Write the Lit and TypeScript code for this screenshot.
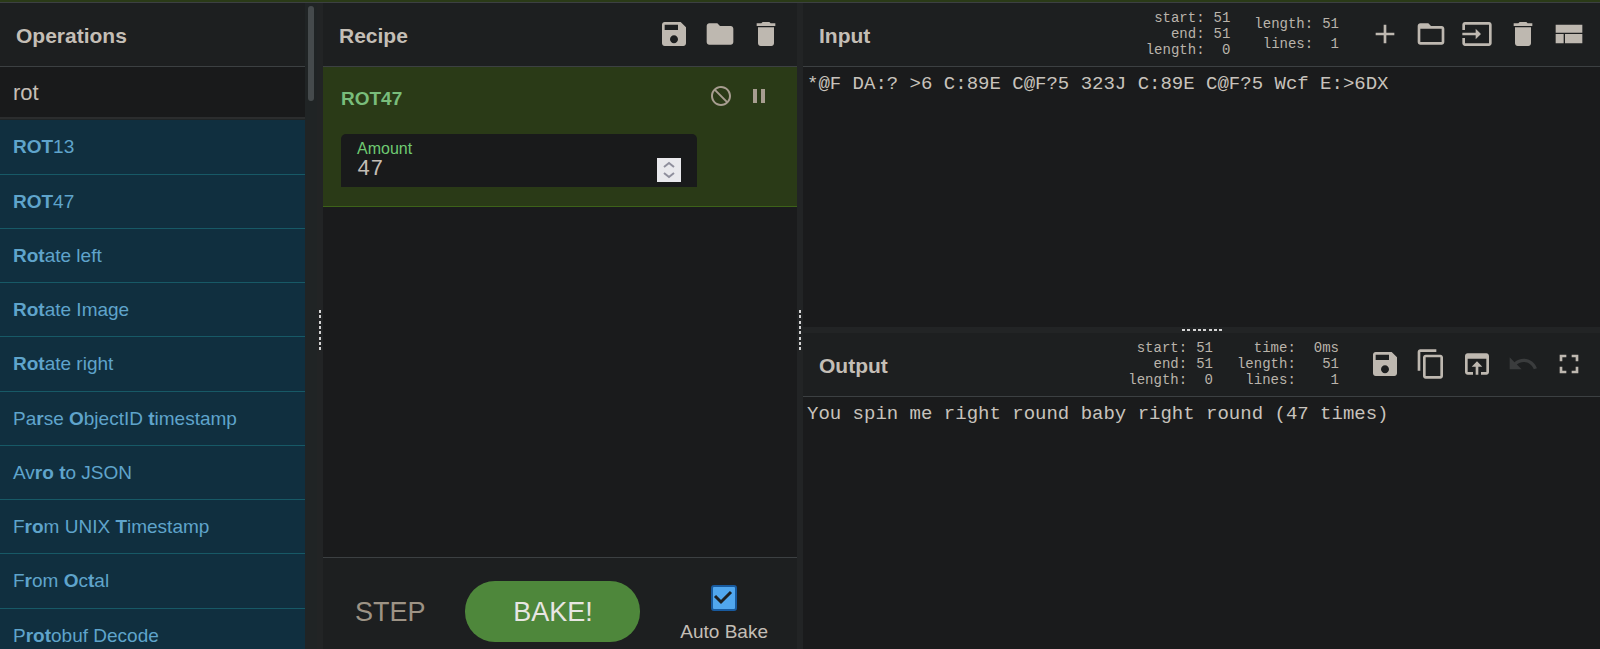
import { LitElement, html, css, svg } from "lit";
import { customElement, property, state } from "lit/decorators.js";

const ICONS: Record<string, string> = {
  save: "M17 3H5c-1.11 0-2 .9-2 2v14c0 1.1.89 2 2 2h14c1.1 0 2-.9 2-2V7l-4-4zm-5 16c-1.66 0-3-1.34-3-3s1.34-3 3-3 3 1.34 3 3-1.34 3-3 3zm3-10H5V5h10v4z",
  folder: "M10 4H4c-1.1 0-1.99.9-1.99 2L2 18c0 1.1.9 2 2 2h16c1.1 0 2-.9 2-2V8c0-1.1-.9-2-2-2h-8l-2-2z",
  remove: "M6 19c0 1.1.9 2 2 2h8c1.1 0 2-.9 2-2V7H6v12zM19 4h-3.5l-1-1h-5l-1 1H5v2h14V4z",
  add: "M19 13h-6v6h-2v-6H5v-2h6V5h2v6h6v2z",
  folderOpen: "M20 6h-8l-2-2H4c-1.1 0-1.99.9-1.99 2L2 18c0 1.1.9 2 2 2h16c1.1 0 2-.9 2-2V8c0-1.1-.9-2-2-2zm0 12H4V8h16v10z",
  input: "M21 3.01H3c-1.1 0-2 .9-2 2V9h2V4.99h18v14.03H3V15H1v4.01c0 1.1.9 1.98 2 1.98h18c1.1 0 2-.88 2-1.98v-14c0-1.11-.9-2-2-2zM11 16l4-4-4-4v3H1v2h10v3z",
  layout: "M2 19h6v-7H2v7zm7 0h13v-7H9v7zM2 5v6h20V5H2z",
  copy: "M16 1H4c-1.1 0-2 .9-2 2v14h2V3h12V1zm3 4H8c-1.1 0-2 .9-2 2v14c0 1.1.9 2 2 2h11c1.1 0 2-.9 2-2V7c0-1.1-.9-2-2-2zm0 16H8V7h11v14z",
  toInput: "M19 4H5c-1.11 0-2 .9-2 2v12c0 1.1.89 2 2 2h4v-2H5V8h14v10h-4v2h4c1.1 0 2-.9 2-2V6c0-1.1-.89-2-2-2zm-7 6l-4 4h3v6h2v-6h3l-4-4z",
  undo: "M12.5 8c-2.65 0-5.05.99-6.9 2.6L2 7v9h9l-3.62-3.62c1.39-1.16 3.16-1.88 5.12-1.88 3.54 0 6.55 2.31 7.6 5.5l2.37-.78C21.08 11.03 17.15 8 12.5 8z",
  fullscreen: "M7 14H5v5h5v-2H7v-3zm-2-4h2V7h3V5H5v5zm12 7h-3v2h5v-5h-2v3zM14 5v2h3v3h2V5h-5z",
  disable: "M12 2C17.52 2 22 6.48 22 12s-4.48 10-10 10S2 17.52 2 12 6.48 2 12 2zM20 12c0-4.42-3.58-8-8-8-1.85 0-3.55.63-4.9 1.69L18.31 16.9C19.37 15.55 20 13.85 20 12zm-8 8c1.85 0 3.55-.63 4.9-1.69L5.69 7.1C4.63 8.45 4 10.15 4 12c0 4.42 3.58 8 8 8z",
  pause: "M6 19h4V5H6v14zm8-14v14h4V5h-4z",
};

@customElement("icon-button")
class IconButton extends LitElement {
  @property() icon = "";
  @property() label = "";
  @property({ type: Boolean }) disabled = false;

  static styles = css`
    :host { display: block; }
    .button {
      display: block;
      width: 100%;
      padding: 0;
      border: 0;
      background: none;
      color: inherit;
      cursor: pointer;
    }
    .button:disabled { color: #3a3c3d; cursor: default; }
    .glyph { display: block; width: 100%; fill: currentColor; }
  `;

  render() {
    return html`<button class="button" title=${this.label} aria-label=${this.label} ?disabled=${this.disabled}>
      <svg class="glyph" viewBox="0 0 24 24" aria-hidden="true">${svg`<path d=${ICONS[this.icon]}></path>`}</svg>
    </button>`;
  }
}

/* Matched search letters are wrapped in square brackets. */
const OPERATIONS = [
  "[ROT]13",
  "[ROT]47",
  "[Rot]ate left",
  "[Rot]ate Image",
  "[Rot]ate right",
  "Pa[r]se [O]bjectID [t]imestamp",
  "Av[ro] [t]o JSON",
  "F[ro]m UNIX [T]imestamp",
  "F[r]om [O]c[t]al",
  "P[rot]obuf Decode",
];

type Stat = [string, string];

@customElement("app-root")
class AppRoot extends LitElement {
  @state() private amount = 47;

  static styles = css`
    :host {
      display: block;
      height: 100vh;
      overflow: hidden;
      background: #1a1b1c;
      color: #c4beb6;
      font-family: "Liberation Sans", Arial, sans-serif;
      font-size: 19px;
    }
    * { box-sizing: border-box; }
    .banner { height: 3px; background: #2a3a17; border-bottom: 1px solid #3c4042; }
    .workspace { display: flex; height: calc(100vh + 5px); }
    .pane { display: flex; flex-direction: column; min-width: 0; min-height: 0; }
    .operations { flex: 0 0 calc(20% - 3px); flex-direction: row; background: #202425; }
    .recipe { flex: 0 0 calc(30% - 6px); }
    .io { flex: 1; display: grid; grid-template-rows: 1fr 6px 1fr; min-width: 0; }

    .gutter { display: flex; align-items: center; justify-content: center; background: #222425; }
    .gutter.column { flex: 0 0 6px; }
    .grip { width: 2px; height: 40px;
      background: repeating-linear-gradient(#d4d4d4 0 3px, transparent 3px calc(100% * 2 / 15)); }
    .grip.across { width: 40px; height: 2px;
      background: repeating-linear-gradient(90deg, #d4d4d4 0 3px, transparent 3px calc(100% * 2 / 15)); }

    .title {
      display: flex;
      flex: 0 0 64px;
      align-items: center;
      padding: 0 15px 0 16px;
      background: #1d1f20;
      border-bottom: 1px solid #3c4042;
    }
    .heading { margin: 0; padding-top: 2px; font-size: 21px; line-height: 24px; font-weight: bold; color: #c4beb6; }
    .actions { display: flex; gap: 14px; margin-left: auto; padding-bottom: 1px; color: #beb8b0; }
    .actions icon-button { width: 32px; }

    .catalogue { flex: 1; display: flex; flex-direction: column; min-width: 0; overflow: hidden; }
    .search {
      flex: 0 0 52px;
      width: 100%;
      margin: 0 0 1px;
      padding: 2px 13px 0;
      border: 0;
      border-bottom: 2px solid #2b2d2e;
      outline: 0;
      background: #191a1b;
      color: #c4beb6;
      font: 22px "Liberation Sans", Arial, sans-serif;
    }
    .list { display: grid; grid-auto-rows: 55px 54px 54px 54px; margin: 0; padding: 0; list-style: none; }
    .operation {
      padding: 0 13px;
      background: #102f3f;
      border-bottom: 1px solid #175966;
      color: #5fa4cb;
      line-height: 54px;
      white-space: pre;
    }
    .track { flex: 0 0 12px; padding: 3px; }
    .thumb { height: 95px; border-radius: 3px; background: #454a4c; }

    .steps { flex: 1; min-height: 0; background: #1a1b1c; }
    .ingredient { padding: 14px 18px 19px; background: #2a3a17; border-bottom: 1px solid #3d6219; }
    .ingredient-head { display: flex; align-items: center; height: 30px; }
    .ingredient-name { margin: 0; padding-top: 5px; font-size: 19px; line-height: 23px; color: #79bd7b; }
    .ingredient-actions { display: flex; gap: 14px; margin-left: auto; padding-right: 8px; color: #a79d90; }
    .ingredient-actions icon-button { width: 24px; }
    .argument {
      display: grid;
      grid-template-columns: 1fr 24px;
      width: calc(80% + 6px);
      height: 53px;
      margin-top: 23px;
      padding: 5px 16px;
      background: #191a1b;
      border-radius: 5px 5px 0 0;
    }
    .argument-label { grid-column: 1 / -1; font-size: 16px; line-height: 19px; color: #6fc972; }
    .amount {
      width: 100%;
      height: 24px;
      margin: 0;
      padding: 0 0 2px;
      border: 0;
      outline: 0;
      background: none;
      color: #c4beb6;
      font: 22px "Liberation Mono", monospace;
      line-height: 22px;
      appearance: textfield;
    }
    .amount::-webkit-inner-spin-button { display: none; }
    .spinner { display: grid; grid-template-rows: 12px 12px; background: #e9e9ed; }
    .spin { display: block; padding: 0; border: 0; background: none; color: #8f8f9d; }
    .chevron { display: block; width: 24px; height: 12px; fill: none; stroke: currentColor; stroke-width: 2; }

    .controls {
      display: flex;
      flex: 0 0 100px;
      justify-content: space-between;
      align-items: flex-start;
      padding: 23px 29px 0 32px;
      background: #1d1f20;
      border-top: 1px solid #3c4042;
    }
    .step, .bake { height: 61px; padding: 2px 0 0; border: 0; font: 27px "Liberation Sans", Arial, sans-serif; }
    .step { background: none; color: #9d9385; }
    .bake { width: 175px; border-radius: 30px; background: #4e873b; color: #e8e6e3; }
    .auto { display: flex; flex-direction: column; align-items: center; padding-top: 4px; line-height: 22px; }
    .tick {
      appearance: none;
      width: 26px;
      height: 26px;
      margin: 0 0 10px;
      border: 2px solid #185a9e;
      border-radius: 3px;
      background: #51a7ee;
    }
    .tick-box { position: relative; display: flex; }
    .tick-mark { position: absolute; inset: 0; width: 26px; height: 26px; fill: none; stroke: #1e2021; stroke-width: 3; pointer-events: none; }
    .tick:not(:checked) + .tick-mark { display: none; }

    .stats { display: flex; gap: 24px; align-items: center; margin: 0 30px 0 auto; padding-bottom: 2px;
      font: 14px "Liberation Mono", monospace; color: #bab4ab; }
    .stat { display: grid; grid-template-columns: auto auto; column-gap: 9px; margin: 0; line-height: 16px; text-align: right; }
    .stat.spaced { column-gap: 18px; }
    .stat.loose { line-height: 20px; }
    .term, .value { margin: 0; }
    .io .actions { margin-left: 0; }
    .text {
      flex: 1;
      display: block;
      width: 100%;
      margin: 0;
      padding: 6px 4px;
      border: 0;
      outline: 0;
      resize: none;
      background: #1a1b1c;
      color: #c8c3bc;
      font: 19px "Liberation Mono", monospace;
      line-height: 22px;
    }
  `;

  private operation(name: string) {
    const parts = name.split(/[[\]]/);
    return html`<li class="operation">${parts.map((part, i) => (i % 2 ? html`<b>${part}</b>` : part))}</li>`;
  }

  private stat(rows: Stat[], kind = "") {
    return html`<dl class="stat ${kind}">
      ${rows.map(([term, value]) => html`<dt class="term">${term}:</dt><dd class="value">${value}</dd>`)}
    </dl>`;
  }

  render() {
    return html`
      <div class="banner"></div>
      <main class="workspace">
        <section class="pane operations">
          <div class="catalogue">
            <header class="title"><h2 class="heading">Operations</h2></header>
            <input class="search" type="text" aria-label="Search operations" .value=${"rot"} />
            <ul class="list">${OPERATIONS.map((name) => this.operation(name))}</ul>
          </div>
          <div class="track" aria-hidden="true"><div class="thumb"></div></div>
        </section>

        <div class="gutter column"><div class="grip"></div></div>

        <section class="pane recipe">
          <header class="title">
            <h2 class="heading">Recipe</h2>
            <div class="actions">
              <icon-button icon="save" label="Save recipe"></icon-button>
              <icon-button icon="folder" label="Load recipe"></icon-button>
              <icon-button icon="remove" label="Clear recipe"></icon-button>
            </div>
          </header>
          <div class="steps">
            <article class="ingredient">
              <div class="ingredient-head">
                <h3 class="ingredient-name">ROT47</h3>
                <div class="ingredient-actions">
                  <icon-button icon="disable" label="Disable operation"></icon-button>
                  <icon-button icon="pause" label="Set breakpoint"></icon-button>
                </div>
              </div>
              <div class="argument">
                <label class="argument-label" for="amount">Amount</label>
                <input class="amount" id="amount" type="number" .value=${String(this.amount)}
                  @input=${(e: Event) => (this.amount = Number((e.target as HTMLInputElement).value))} />
                <div class="spinner">
                  <button class="spin" aria-label="Increase" @click=${() => this.amount++}>
                    <svg class="chevron" viewBox="0 0 24 12"><path d="M7 9l5-4 5 4"></path></svg>
                  </button>
                  <button class="spin" aria-label="Decrease" @click=${() => this.amount--}>
                    <svg class="chevron" viewBox="0 0 24 12"><path d="M7 3l5 4 5-4"></path></svg>
                  </button>
                </div>
              </div>
            </article>
          </div>
          <footer class="controls">
            <button class="step">STEP</button>
            <button class="bake">BAKE!</button>
            <label class="auto">
              <span class="tick-box">
                <input class="tick" type="checkbox" checked />
                <svg class="tick-mark" viewBox="0 0 26 26"><path d="M4 11l6 6L20 7"></path></svg>
              </span>
              Auto Bake
            </label>
          </footer>
        </section>

        <div class="gutter column"><div class="grip"></div></div>

        <div class="io">
          <section class="pane">
            <header class="title">
              <h2 class="heading">Input</h2>
              <div class="stats">
                ${this.stat([["start", "51"], ["end", "51"], ["length", "0"]])}
                ${this.stat([["length", "51"], ["lines", "1"]], "loose")}
              </div>
              <div class="actions">
                <icon-button icon="add" label="Add a new input tab"></icon-button>
                <icon-button icon="folderOpen" label="Open folder as input"></icon-button>
                <icon-button icon="input" label="Open file as input"></icon-button>
                <icon-button icon="remove" label="Clear input and output"></icon-button>
                <icon-button icon="layout" label="Reset pane layout"></icon-button>
              </div>
            </header>
            <textarea class="text" aria-label="Input" spellcheck="false"
              .value=${"*@F DA:? >6 C:89E C@F?5 323J C:89E C@F?5 Wcf E:>6DX"}></textarea>
          </section>

          <div class="gutter"><div class="grip across"></div></div>

          <section class="pane">
            <header class="title">
              <h2 class="heading">Output</h2>
              <div class="stats">
                ${this.stat([["start", "51"], ["end", "51"], ["length", "0"]])}
                ${this.stat([["time", "0ms"], ["length", "51"], ["lines", "1"]], "spaced")}
              </div>
              <div class="actions">
                <icon-button icon="save" label="Save output to file"></icon-button>
                <icon-button icon="copy" label="Copy output"></icon-button>
                <icon-button icon="toInput" label="Replace input with output"></icon-button>
                <icon-button icon="undo" label="Undo" disabled></icon-button>
                <icon-button icon="fullscreen" label="Maximise output pane"></icon-button>
              </div>
            </header>
            <textarea class="text" aria-label="Output" readonly
              .value=${"You spin me right round baby right round (47 times)"}></textarea>
          </section>
        </div>
      </main>
    `;
  }
}
